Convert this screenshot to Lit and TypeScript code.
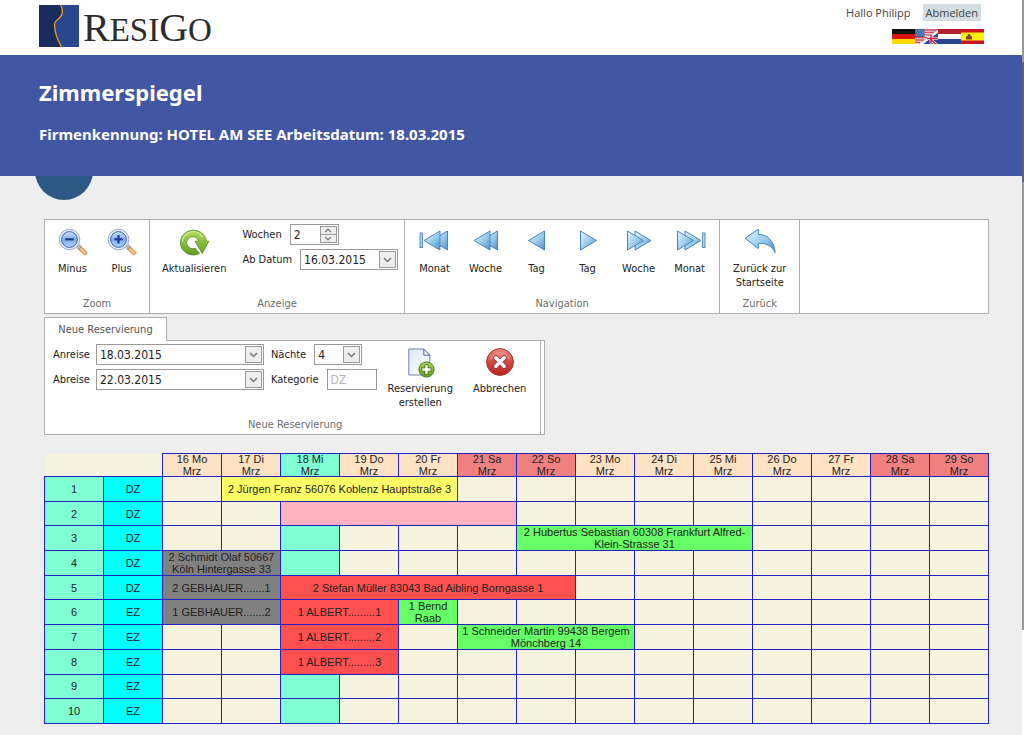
import { LitElement, html, css, svg, nothing } from "lit";
import { customElement } from "lit/decorators.js";
import { classMap } from "lit/directives/class-map.js";

type Cell = { span: number; tone: string; text: string };
type Booking = { from: number; span: number; tone: string; text: string };
type Room = { no: number; type: string; bookings: Booking[] };

const TODAY = 2;

const DAYS = [
  "16 Mo", "17 Di", "18 Mi", "19 Do", "20 Fr", "21 Sa", "22 So",
  "23 Mo", "24 Di", "25 Mi", "26 Do", "27 Fr", "28 Sa", "29 So",
];

const ROOMS: Room[] = [
  { no: 1, type: "DZ", bookings: [{ from: 1, span: 4, tone: "yellow", text: "2 Jürgen Franz 56076 Koblenz Hauptstraße 3" }] },
  { no: 2, type: "DZ", bookings: [{ from: 2, span: 4, tone: "pink", text: "" }] },
  { no: 3, type: "DZ", bookings: [{ from: 6, span: 4, tone: "green", text: "2 Hubertus Sebastian 60308 Frankfurt Alfred-Klein-Strasse 31" }] },
  { no: 4, type: "DZ", bookings: [{ from: 0, span: 2, tone: "grey", text: "2 Schmidt Olaf 50667 Köln Hintergasse 33" }] },
  { no: 5, type: "DZ", bookings: [
    { from: 0, span: 2, tone: "grey", text: "2 GEBHAUER.......1" },
    { from: 2, span: 5, tone: "red", text: "2 Stefan Müller 83043 Bad Aibling Borngasse 1" },
  ] },
  { no: 6, type: "EZ", bookings: [
    { from: 0, span: 2, tone: "grey", text: "1 GEBHAUER.......2" },
    { from: 2, span: 2, tone: "red", text: "1 ALBERT.........1" },
    { from: 4, span: 1, tone: "green", text: "1 Bernd Raab" },
  ] },
  { no: 7, type: "EZ", bookings: [
    { from: 2, span: 2, tone: "red", text: "1 ALBERT.........2" },
    { from: 5, span: 3, tone: "green", text: "1 Schneider Martin 99438 Bergem Mönchberg 14" },
  ] },
  { no: 8, type: "EZ", bookings: [{ from: 2, span: 2, tone: "red", text: "1 ALBERT.........3" }] },
  { no: 9, type: "EZ", bookings: [] },
  { no: 10, type: "EZ", bookings: [] },
];

function cellsOf(room: Room): Cell[] {
  const cells: Cell[] = [];
  let day = 0;
  while (day < DAYS.length) {
    const hit = room.bookings.find((b) => b.from === day);
    if (hit) {
      cells.push({ span: hit.span, tone: hit.tone, text: hit.text });
      day += hit.span;
    } else {
      cells.push({ span: 1, tone: day === TODAY ? "today" : "free", text: "" });
      day += 1;
    }
  }
  return cells;
}

const gradients = svg`
  <defs>
    <linearGradient id="blue" x1="0" y1="0" x2="1" y2="1">
      <stop offset="0" stop-color="#e4f5fd"/><stop offset=".5" stop-color="#a0d0ee"/><stop offset="1" stop-color="#4a90cc"/>
    </linearGradient>
    <linearGradient id="lens" x1="0" y1="0" x2="0" y2="1">
      <stop offset="0" stop-color="#cfe2fa"/><stop offset=".5" stop-color="#7fb0ee"/><stop offset="1" stop-color="#a8d4fb"/>
    </linearGradient>
    <linearGradient id="green" x1="0" y1="0" x2="0" y2="1">
      <stop offset="0" stop-color="#b4dc5c"/><stop offset="1" stop-color="#5f9e1c"/>
    </linearGradient>
    <linearGradient id="red" x1="0" y1="0" x2="0" y2="1">
      <stop offset="0" stop-color="#ea8a80"/><stop offset=".5" stop-color="#d2493f"/><stop offset="1" stop-color="#b8251d"/>
    </linearGradient>
    <linearGradient id="page" x1="0" y1="0" x2="1" y2="1">
      <stop offset="0" stop-color="#dfeafa"/><stop offset="1" stop-color="#ffffff"/>
    </linearGradient>
  </defs>`;

const magnifier = (plus: boolean) => svg`
  <path d="M19.500 20.500l3-3 2 2-3 3z" fill="#b8bcc6" stroke="#8d93a3" stroke-width=".6"/>
  <path d="M21.600 22.400l2.600-2.600 5.400 5.200c1.200 1.300-1.100 3.700-2.500 2.500z" fill="#f3b070" stroke="#b0713b" stroke-width=".8"/>
  <path d="M23.600 21.800l4.800 4.700" stroke="#fde2c2" stroke-width="1"/>
  <circle cx="12.500" cy="12.500" r="10.300" fill="#e9edf5" stroke="#8f9fc4" stroke-width=".9"/>
  <circle cx="12.500" cy="12.500" r="7.900" fill="url(#lens)" stroke="#3f62ad" stroke-width="1"/>
  <path d="M8.300 12.300h8.400" stroke="#1d3c8e" stroke-width="2.200"/>
  ${plus ? svg`<path d="M12.500 8.100v8.400" stroke="#1d3c8e" stroke-width="2.200"/>` : nothing}`;

const left = (tip: number) => svg`<path d="M${tip} 13.500l16-9.500v19z" fill="url(#blue)" stroke="#4b83bd" stroke-width="1" stroke-linejoin="round"/>`;
const right = (tip: number) => svg`<path d="M${tip} 13.500l-16-9.500v19z" fill="url(#blue)" stroke="#4b83bd" stroke-width="1" stroke-linejoin="round"/>`;
const bar = (x: number) => svg`<rect x="${x}" y="6" width="2.400" height="14.500" fill="#b5dbf2" stroke="#4b83bd" stroke-width=".9"/>`;

const ICONS: Record<string, unknown> = {
  minus: magnifier(false),
  plus: magnifier(true),
  refresh: svg`
    <path d="M21.400 26.600a13 12.400 0 1 1 6.900-12.400h2.600l-6.600 12.300-7.400-12.300h3.900a6.200 6 0 1 0-3.500 7z" fill="url(#green)" stroke="#5d9130" stroke-width=".9" stroke-linejoin="round"/>
    <path d="M4.300 14.800a10.800 10.500 0 0 1 20.500-4.200" fill="none" stroke="#d5eda0" stroke-width="1.100"/>`,
  monthBack: svg`${left(12.5)}${left(5)}${bar(1)}`,
  weekBack: svg`${left(11.5)}${left(4)}`,
  dayBack: left(7.5),
  dayNext: right(24.5),
  weekNext: svg`${right(28)}${right(20.5)}`,
  monthNext: svg`${right(27)}${right(19.5)}${bar(28.6)}`,
  home: svg`<path d="M1 11.200L14.300 2.200v5.200c8.800-.3 16.200 6.800 16.800 18.300-3-6.600-8.500-9.700-16.800-9.400v5.300z" fill="url(#blue)" stroke="#4b83bd" stroke-width="1" stroke-linejoin="round"/>`,
  create: svg`
    <path d="M4.800 2h15l6 6v20h-21z" fill="url(#page)" stroke="#7182b5" stroke-width="1"/>
    <path d="M19.800 2v6.200h6z" fill="#fff" stroke="#4e63a3" stroke-width="1" stroke-linejoin="round"/>
    <circle cx="22.500" cy="22.500" r="7.600" fill="url(#green)" stroke="#477a18" stroke-width="1"/>
    <path d="M22.500 17.500v10M17.500 22.500h10" stroke="#3f6f14" stroke-width="4"/>
    <path d="M22.500 18.300v8.400M18.300 22.500h8.400" stroke="#fff" stroke-width="2.400"/>`,
  cancel: svg`
    <circle cx="16" cy="15" r="13.400" fill="url(#red)" stroke="#a5362e" stroke-width="1"/>
    <path d="M5 13a11.200 10 0 0 1 22 0c-6-2.500-15-2.500-22 0z" fill="#fff" opacity=".16"/>
    <path d="M11.800 10.800l8.400 8.400M20.200 10.800l-8.400 8.400" stroke="#8a3a40" stroke-width="5.200" stroke-linecap="round"/>
    <path d="M11.800 10.800l8.400 8.400M20.200 10.800l-8.400 8.400" stroke="#eef2fa" stroke-width="3.600" stroke-linecap="round"/>`,
};

@customElement("tool-button")
export class ToolButton extends LitElement {
  static properties = { icon: {}, label: {} };
  declare icon: string;
  declare label: string;

  static styles = css`
    :host { display: block; }
    .btn {
      display: flex; flex-direction: column; align-items: center; gap: 3px;
      min-width: 49px; padding: 0; border: 0; background: none; color: #222; cursor: pointer;
      font: 11px/14px "DejaVu Sans Condensed", "DejaVu Sans", Tahoma, sans-serif;
      white-space: pre-line; text-align: center;
    }
    .icon { width: 32px; height: 32px; display: block; }
  `;

  render() {
    return html`<button class="btn" type="button">
      <svg class="icon" viewBox="0 0 32 32" fill="none" aria-hidden="true">${gradients}${ICONS[this.icon]}</svg><span>${this.label}</span>
    </button>`;
  }
}

@customElement("app-root")
export class AppRoot extends LitElement {
  static styles = css`
    :host {
      display: block; position: relative; min-height: 100vh; background: #eee; color: #222;
      font: 11px/14px "DejaVu Sans Condensed", "DejaVu Sans", Tahoma, sans-serif;
    }
    * { box-sizing: border-box; }
    .top {
      display: flex; justify-content: space-between; align-items: flex-start;
      height: 55px; padding: 4px 40px 0 39px; background: #fff;
    }
    .brand { display: flex; align-items: flex-start; gap: 4px; color: #2c2c2c; text-decoration: none; }
    .mark { width: 40px; height: 43px; display: block; }
    .name { font: 33px/48px "Liberation Serif", "Times New Roman", serif; }
    .cap { font-size: 40px; }
    .user { display: flex; flex-direction: column; align-items: flex-end; gap: 8px; }
    .session {
      display: flex; align-items: center; gap: 12px; margin-right: 3px; color: #444;
      font: 11px/17px "Open Sans", "Segoe UI", sans-serif;
    }
    .logout { padding: 0 3px; background: #d3dde2; color: #444; text-decoration: none; }
    .flags { display: flex; }
    .flag { display: block; line-height: 0; }
    .flag svg { display: block; width: 23px; height: 15px; }
    .band {
      position: relative; height: 121px; padding: 20px 39px 0; background: #4257a3; color: #fff;
      font-family: "Noto Sans", "Segoe UI", sans-serif;
    }
    .title { margin: 0; font-size: 22px; line-height: 34px; font-weight: 700; }
    .info { margin: 15px 0 0; font-size: 15px; line-height: 20px; font-weight: 700; }
    .knob {
      position: absolute; left: 35px; top: 100%; width: 58px; height: 24px;
      background: #2c5985; clip-path: circle(29px at 50% -5px);
    }
    .scroll { position: absolute; right: 0; top: 0; bottom: 0; width: 2px; background: #fff; }
    .track { height: 630px; padding-top: 62px; background: #999; }
    .thumb { height: 120px; background: #59637f; }
    .main { padding: 43px 35px 0 44px; }
    .ribbon { display: flex; height: 95px; background: #fff; border: 1px solid #adadad; }
    .group {
      display: flex; flex-direction: column; justify-content: space-between;
      padding: 4px 3px 2px; border-right: 1px solid #adadad;
    }
    .caption { color: #6c6c6c; text-align: center; }
    .row { display: flex; }
    .tools { padding-top: 3px; }
    .nav { padding: 3px 2px 0; gap: 2px; }
    .back { padding: 3px 10px 0; }
    .show { gap: 16px; padding: 0 3px 0 9px; }
    .fields { display: flex; flex-direction: column; gap: 4px; }
    .field { display: flex; align-items: center; gap: 8px; height: 21px; }
    .field label { white-space: nowrap; }
    .box {
      display: flex; align-items: stretch; height: 21px; padding: 1px;
      background: #fff; border: 1px solid #999;
    }
    .box input, .box select {
      flex: 1; min-width: 0; width: 100%; margin: 0; padding: 1px 2px 0; border: 0; background: none; color: #222;
      font: 12px/16px "DejaVu Sans Condensed", "DejaVu Sans", Tahoma, sans-serif;
      appearance: none; -moz-appearance: textfield;
    }
    .box input::-webkit-inner-spin-button { appearance: none; margin: 0; }
    .box input:disabled { color: #b5b5b5; }
    .pick {
      display: flex; align-items: center; justify-content: center; flex: none;
      width: 17px; padding: 0; border: 1px solid #999; background: #eee;
    }
    .pick svg { display: block; width: 9px; height: 6px; }
    .spin { display: flex; flex-direction: column; flex: none; width: 17px; }
    .spin .pick { flex: 1; min-height: 0; }
    .spin .pick + .pick { border-top: 0; }
    .spin .pick svg { width: 8px; height: 5px; }
    .weeks { width: 49px; }
    .date { width: 98px; }
    .long { width: 168px; }
    .nights { width: 48px; }
    .nights .pick { pointer-events: none; }
    .cat { width: 50px; }
    .wide { gap: 6px; }
    .tab {
      width: 123px; height: 24px; margin: 3px 0 -1px; padding: 0; position: relative; display: block;
      border: 1px solid #adadad; border-bottom: 0; background: #fff; color: #555; font: inherit;
    }
    .form { display: flex; width: fit-content; height: 95px; background: #fff; border: 1px solid #adadad; padding-right: 3px; }
    .form .group { padding: 3px 3px 2px 8px; }
    .inputs { gap: 7px; }
    .actions { padding: 3px 11px 0 4px; gap: 20px; }
    .plan {
      width: 100%; height: 271px; margin-top: 18px; border-collapse: collapse; table-layout: fixed;
      font: 11px/12px "Liberation Sans", Arial, sans-serif; color: #222; text-align: center;
    }
    .plan th, .plan td { padding: 0; border: 1px solid #2222c4; font-weight: 400; background: #f5f3de; }
    .plan .corner { border-top-style: hidden; border-left-style: hidden; }
    .plan .day { background: #ffe1c4; }
    .plan .weekend { background: #f08080; }
    .plan .today { background: #80ffd4; }
    .plan .no { background: #80ffd4; }
    .plan .type { background: #00ffff; }
    .plan .yellow { background: #ffff66; }
    .plan .pink { background: #ffb3c1; }
    .plan .green { background: #66ff66; }
    .plan .grey { background: #808080; }
    .plan .red { background: #ff5050; }
    .text { display: flex; align-items: center; justify-content: center; height: 22px; padding: 0 2px; }
    .stack { white-space: pre-line; }
  `;

  private chevron(up = false) {
    return html`<svg viewBox="0 0 9 6" fill="none" aria-hidden="true">
      <path d=${up ? "M1 5l3.500-3.500L8 5" : "M1 1l3.500 3.500L8 1"} stroke="#777" stroke-width="1.500"/></svg>`;
  }

  private dateField(id: string, label: string, value: string, size: string) {
    return html`<div class="field ${size === "long" ? "wide" : ""}">
      <label for=${id}>${label}</label>
      <span class="box ${size}"><input id=${id} type="text" .value=${value}><button class="pick" type="button" aria-label="Kalender">${this.chevron()}</button></span>
    </div>`;
  }

  private flags() {
    const f = (name: string, art: unknown) => html`<a class="flag" href="#" aria-label=${name}><svg viewBox="0 0 23 15">${art}</svg></a>`;
    return html`<nav class="flags">
      ${f("Deutsch", svg`<path fill="#111" d="M0 0h23v5H0z"/><path fill="#d8130e" d="M0 5h23v5H0z"/><path fill="#ffd800" d="M0 10h23v5H0z"/>`)}
      ${f("English", svg`
        <path fill="#f0d5da" d="M0 0h23v15H0z"/>
        <path stroke="#cf4a5c" stroke-width="1.300" d="M9 1h14M9 3.400h11M9 5.800h8M0 8.600h13M0 11h9M0 13.400h5"/>
        <path fill="#3d6ba0" d="M0 0h9.500v8H0z"/>
        <path stroke="#9fb9d6" stroke-width=".9" stroke-dasharray="1 1.500" d="M1 2h8M2 4h8M1 6h8"/>
        <path fill="#2c3d94" d="M23 0v15H4z"/>
        <path stroke="#fff" stroke-width="2.600" d="M13 8l9 8M5 16L23 2M16 6v9M12 9.500h11"/>
        <path stroke="#d3263c" stroke-width="1.500" d="M14 9l8 7M16 6v9M12 9.500h11"/>`)}
      ${f("Nederlands", svg`<path fill="#b3202e" d="M0 0h23v5H0z"/><path fill="#fff" d="M0 5h23v5H0z"/><path fill="#26458e" d="M0 10h23v5H0z"/>`)}
      ${f("Español", svg`<path fill="#cc1420" d="M0 0h23v15H0z"/><path fill="#fff200" d="M0 3.500h23v8H0z"/><path fill="#7d4a22" d="M5 10.500V7.500l1.500-.5.500-2h2l.5 2 1.500.5v3z"/>`)}
    </nav>`;
  }

  render() {
    return html`
      <header class="top">
        <a class="brand" href="#" aria-label="ResiGo">
          <svg class="mark" viewBox="0 0 40 43" aria-hidden="true">
            <path fill="#29478c" d="M0 1h40v42H0z"/>
            <path fill="#1a2c5e" d="M0 1h21.500c3 5 2.500 9-.5 12.500C18 16 16 17 15.500 20c0 8 3 16 7 23H0z"/>
            <path fill="none" stroke="#e2a21f" stroke-width="1.300" d="M21.500 1c3 5 2.500 9-.5 12.500C18 16 16 17 15.500 20c0 8 3 16 7 23"/>
          </svg>
          <span class="name"><span class="cap">R</span>ESI<span class="cap">G</span>O</span>
        </a>
        <div class="user">
          <div class="session"><span>Hallo Philipp</span><a class="logout" href="#">Abmelden</a></div>
          ${this.flags()}
        </div>
      </header>
      <section class="band">
        <h1 class="title">Zimmerspiegel</h1>
        <h2 class="info">Firmenkennung: HOTEL AM SEE Arbeitsdatum: 18.03.2015</h2>
        <div class="knob"></div>
      </section>
      <main class="main">
        <div class="ribbon">
          <section class="group">
            <div class="row tools">
              <tool-button icon="minus" label="Minus"></tool-button>
              <tool-button icon="plus" label="Plus"></tool-button>
            </div>
            <div class="caption">Zoom</div>
          </section>
          <section class="group">
            <div class="row show">
              <div class="tools"><tool-button icon="refresh" label="Aktualisieren"></tool-button></div>
              <div class="fields">
                <div class="field">
                  <label for="weeks">Wochen</label>
                  <span class="box weeks"><input id="weeks" type="number" value="2"><span class="spin">
                    <button class="pick" type="button" aria-label="Mehr">${this.chevron(true)}</button>
                    <button class="pick" type="button" aria-label="Weniger">${this.chevron()}</button>
                  </span></span>
                </div>
                ${this.dateField("from", "Ab Datum", "16.03.2015", "date")}
              </div>
            </div>
            <div class="caption">Anzeige</div>
          </section>
          <section class="group">
            <div class="row nav">
              <tool-button icon="monthBack" label="Monat"></tool-button>
              <tool-button icon="weekBack" label="Woche"></tool-button>
              <tool-button icon="dayBack" label="Tag"></tool-button>
              <tool-button icon="dayNext" label="Tag"></tool-button>
              <tool-button icon="weekNext" label="Woche"></tool-button>
              <tool-button icon="monthNext" label="Monat"></tool-button>
            </div>
            <div class="caption">Navigation</div>
          </section>
          <section class="group">
            <div class="row back">
              <tool-button icon="home" label=${"Zurück zur\nStartseite"}></tool-button>
            </div>
            <div class="caption">Zurück</div>
          </section>
        </div>
        <button class="tab" type="button">Neue Reservierung</button>
        <form class="form">
          <section class="group">
            <div class="row inputs">
              <div class="fields">
                ${this.dateField("arrive", "Anreise", "18.03.2015", "long")}
                ${this.dateField("depart", "Abreise", "22.03.2015", "long")}
              </div>
              <div class="fields">
                <div class="field">
                  <label for="nights">Nächte</label>
                  <span class="box nights"><select id="nights"><option>4</option></select><span class="pick">${this.chevron()}</span></span>
                </div>
                <div class="field">
                  <label for="cat">Kategorie</label>
                  <span class="box cat"><input id="cat" type="text" value="DZ" disabled></span>
                </div>
              </div>
              <div class="row actions">
                <tool-button icon="create" label=${"Reservierung\nerstellen"}></tool-button>
                <tool-button icon="cancel" label="Abbrechen"></tool-button>
              </div>
            </div>
            <div class="caption">Neue Reservierung</div>
          </section>
        </form>
        <table class="plan">
          <thead>
            <tr>
              <th class="corner" colspan="2"></th>
              ${DAYS.map((day, i) => html`<th scope="col" class=${classMap({ day: true, today: i === TODAY, weekend: /S[ao]$/.test(day) })}><div class="text stack">${day + "\nMrz"}</div></th>`)}
            </tr>
          </thead>
          <tbody>
            ${ROOMS.map((room) => html`<tr>
              <th class="no" scope="row"><div class="text">${room.no}</div></th>
              <td class="type"><div class="text">${room.type}</div></td>
              ${cellsOf(room).map((c) => html`<td class=${c.tone} colspan=${c.span}><div class="text">${c.text}</div></td>`)}
            </tr>`)}
          </tbody>
        </table>
      </main>
      <div class="scroll"><div class="track"><div class="thumb"></div></div></div>
    `;
  }
}
